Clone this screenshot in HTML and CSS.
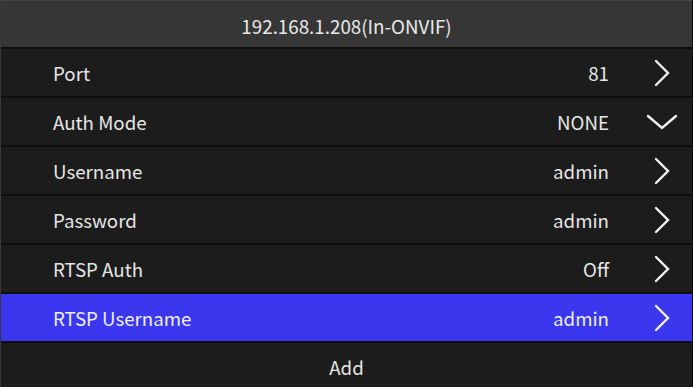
FILE: index.html
```html
<!DOCTYPE html>
<html>
<head>
<meta name="viewport" content="width=device-width, initial-scale=1">
<link rel="stylesheet" href="styles.css">
</head>
<body>

<div class="screen">
  <div class="title">192.168.1.208(In-ONVIF)</div>

  <ul class="menu">
    <li class="item">
      <span class="label">Port</span>
      <span class="value">81</span>
      <svg class="arrow" viewBox="0 0 20 28"><path d="M4 2 L16 14 L4 26"/></svg>
    </li>
    <li class="item">
      <span class="label">Auth Mode</span>
      <span class="value">NONE</span>
      <svg class="arrow" viewBox="0 0 20 28"><path d="M-4 8 L10 20 L24 8"/></svg>
    </li>
    <li class="item">
      <span class="label">Username</span>
      <span class="value">admin</span>
      <svg class="arrow" viewBox="0 0 20 28"><path d="M4 2 L16 14 L4 26"/></svg>
    </li>
    <li class="item">
      <span class="label">Password</span>
      <span class="value">admin</span>
      <svg class="arrow" viewBox="0 0 20 28"><path d="M4 2 L16 14 L4 26"/></svg>
    </li>
    <li class="item">
      <span class="label">RTSP Auth</span>
      <span class="value">Off</span>
      <svg class="arrow" viewBox="0 0 20 28"><path d="M4 2 L16 14 L4 26"/></svg>
    </li>
    <li class="item selected">
      <span class="label">RTSP Username</span>
      <span class="value">admin</span>
      <svg class="arrow" viewBox="0 0 20 28"><path d="M4 2 L16 14 L4 26"/></svg>
    </li>
  </ul>

  <div class="add">Add</div>
</div>

</body>
</html>
```

FILE: styles.css
```css
body {
  margin: 0;
  background: #1c1c1c;
}

* {
  box-sizing: border-box;
  font-family: "Noto Sans CJK SC", "Noto Sans", sans-serif;
}

.screen {
  width: 693px;
  height: 387px;
  display: flex;
  flex-direction: column;
  background: #0e0e0e;
  border-left: 1px solid #3a3a3a;
  border-right: 1px solid #0a0a0a;
  overflow: hidden;
}

/* Top bar */
.title {
  height: 47px;
  flex-shrink: 0;
  background: #363636;
  border-top: 1px solid #444;
  color: #e8e8e8;
  font-size: 18.8px;
  display: flex;
  align-items: center;
  justify-content: center;
  padding-top: 3px;
}

/* Settings list */
.menu {
  list-style: none;
  margin: 0;
  padding: 2px 0 0 0;
  display: flex;
  flex-direction: column;
  gap: 2px;
}

.item {
  height: 47px;
  background: #1c1c1c;
  color: #e6e6e6;
  font-size: 18.7px;
  display: flex;
  align-items: center;
  padding: 0 20px 0 52px;
}

.item.selected {
  background: #3b37ee;
  color: #eeeeff;
}

.label {
  flex: 1;
}

.value {
  margin-right: 43px;
}

.arrow {
  width: 20px;
  height: 28px;
  overflow: visible;
  fill: none;
  stroke: #f2f2f2;
  stroke-width: 2.4;
  stroke-linecap: round;
  stroke-linejoin: miter;
}

.add {
  flex: 1;
  margin-top: 2px;
  padding-top: 2px;
  background: #1c1c1c;
  color: #e6e6e6;
  font-size: 18.7px;
  display: flex;
  align-items: center;
  justify-content: center;
}
```
